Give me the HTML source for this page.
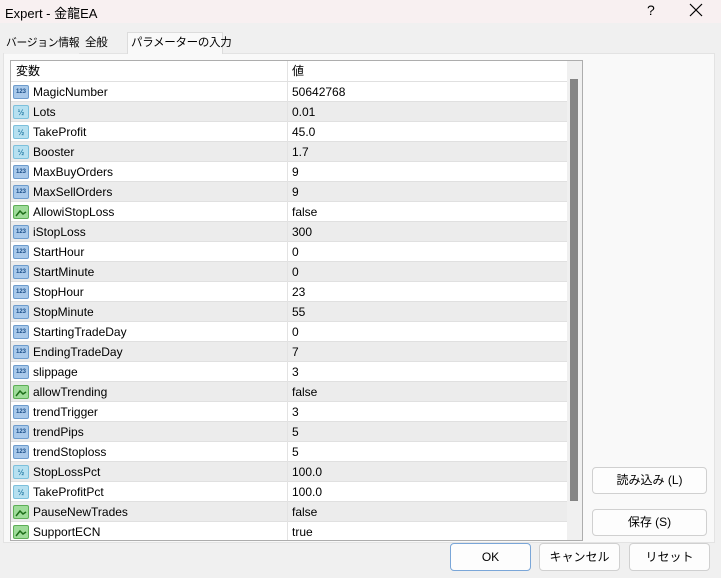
<!DOCTYPE html>
<html><head><meta charset="utf-8"><style>
*{margin:0;padding:0;box-sizing:border-box}
body{width:721px;height:578px;background:#f0f0f0;font-family:"Liberation Sans","Noto Sans CJK JP",sans-serif;font-size:12px;color:#000;position:relative;overflow:hidden}
.abs{position:absolute}
.title{left:0;top:0;width:721px;height:23px;background:#f8f0f1}
.tab{top:33px;height:21px;font-size:11.5px;line-height:20px;padding:0 3px;white-space:nowrap;letter-spacing:-0.3px}
.panel{left:3px;top:53px;width:712px;height:490px;background:#f9f9f9;border:1px solid #e3e3e3}
.table{left:10px;top:60px;width:573px;height:481px;border:1px solid #adadad;background:#fff;overflow:hidden}
.row{position:absolute;left:0;width:556px;height:20px;line-height:21px;border-bottom:1px solid #e0e0e0}
.row .n{position:absolute;left:22px}
.row .v{position:absolute;left:276px;border-left:1px solid #e3e3e3;padding-left:4px;height:20px;top:0}
.ic{position:absolute;left:2px;top:3px;width:16px;height:14px;border-radius:2px;font-size:6px;line-height:13px;text-align:center;font-weight:bold}
.i123{background:#a9c9ea;color:#1b4f8a;border:1px solid #6d9ccd}
.ih{background:#b6e0f0;color:#2a7fa8;border:1px solid #7cc0dc;font-size:8px}
.ib{background:#9fdc9a;border:1px solid #5dae57}
.btn{position:absolute;background:#fdfdfd;border:1px solid #d0d0d0;border-radius:4px;text-align:center;font-size:12px}
</style></head><body>
<div class="abs title"></div>
<div class="abs" style="left:5px;top:3px;font-size:13px">Expert - 金龍EA</div>
<div class="abs" style="left:647px;top:2px;font-size:14px">?</div>
<svg class="abs" style="left:689px;top:3px" width="14" height="14"><path d="M1 1L13 13M13 1L1 13" stroke="#000" stroke-width="1.2"/></svg>
<div class="abs panel"></div>
<div class="abs tab" style="left:4px;width:75px;background:#f0f0f0;font-size:10.8px;padding:0 2px">バージョン情報</div>
<div class="abs tab" style="left:82px">全般</div>
<div class="abs tab" style="left:127px;top:32px;height:22px;width:96px;background:#f9f9f9;border:1px solid #dcdcdc;border-bottom:none">パラメーターの入力</div>
<div class="abs table">
<div class="row" style="top:0;height:21px"><span class="n" style="left:5px">変数</span><span class="v">値</span></div>
<div id="rows"></div>
<div class="abs" style="left:556px;top:0;width:16px;height:481px;background:#f0f0f0"></div>
<div class="abs" style="left:559px;top:18px;width:8px;height:422px;background:#858585"></div>
</div>
<script>
var d=[["i123","MagicNumber","50642768"],["ih","Lots","0.01"],["ih","TakeProfit","45.0"],["ih","Booster","1.7"],["i123","MaxBuyOrders","9"],["i123","MaxSellOrders","9"],["ib","AllowiStopLoss","false"],["i123","iStopLoss","300"],["i123","StartHour","0"],["i123","StartMinute","0"],["i123","StopHour","23"],["i123","StopMinute","55"],["i123","StartingTradeDay","0"],["i123","EndingTradeDay","7"],["i123","slippage","3"],["ib","allowTrending","false"],["i123","trendTrigger","3"],["i123","trendPips","5"],["i123","trendStoploss","5"],["ih","StopLossPct","100.0"],["ih","TakeProfitPct","100.0"],["ib","PauseNewTrades","false"],["ib","SupportECN","true"]];
var h="";d.forEach(function(r,i){var t=r[0]=="i123"?"123":r[0]=="ih"?"½":'<svg width="14" height="12"><path d="M2 10 L6 5 L9 8 L12 6" stroke="#1f6e1a" stroke-width="1.5" fill="none"/></svg>';
h+='<div class="row" style="top:'+(21+i*20)+'px;background:'+(i%2?'#ececec':'#fff')+'"><span class="ic '+r[0]+'">'+t+'</span><span class="n">'+r[1]+'</span><span class="v">'+r[2]+'</span></div>';});
document.getElementById("rows").innerHTML=h;
</script>
<div class="btn" style="left:592px;top:467px;width:115px;height:27px;line-height:25px">読み込み (L)</div>
<div class="btn" style="left:592px;top:509px;width:115px;height:27px;line-height:25px">保存 (S)</div>
<div class="btn" style="left:450px;top:543px;width:81px;height:28px;line-height:26px;border:1px solid #7aa6d8">OK</div>
<div class="btn" style="left:539px;top:543px;width:81px;height:28px;line-height:26px">キャンセル</div>
<div class="btn" style="left:629px;top:543px;width:81px;height:28px;line-height:26px">リセット</div>
</body></html>
